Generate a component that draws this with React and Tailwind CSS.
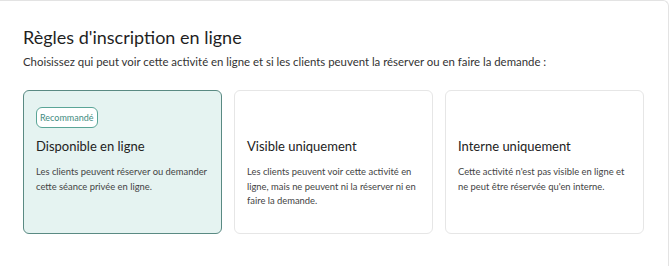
const options = [
  {
    title: 'Disponible en ligne',
    text: 'Les clients peuvent réserver ou demander cette séance privée en ligne.',
    recommended: true,
    selected: true,
  },
  {
    title: 'Visible uniquement',
    text: 'Les clients peuvent voir cette activité en ligne, mais ne peuvent ni la réserver ni en faire la demande.',
  },
  {
    title: 'Interne uniquement',
    text: "Cette activité n'est pas visible en ligne et ne peut être réservée qu'en interne.",
  },
];

function OptionCard({ option }) {
  return (
    <div
      className={`w-[199px] h-[144px] rounded-[6px] border px-[12px] pt-[12px] ${
        option.selected ? 'bg-[#e5f3f1] border-[#5a8a83]' : 'bg-white border-[#e6e6e6]'
      }`}
    >
      <div className="h-[21px]">
        {option.recommended && (
          <span className="inline-flex items-center h-[21px] px-[3px] rounded-[6px] border border-[#5aa597] bg-white text-[9px] text-[#3f8c7f]">
            Recommandé
          </span>
        )}
      </div>
      <h3 className="mt-[13px] text-[13px] leading-[18px] text-[#222]">{option.title}</h3>
      <p className="mt-[10px] text-[9.4px] leading-[14.5px] text-[#444]">{option.text}</p>
    </div>
  );
}

export default function App() {
  return (
    <div className="w-[670px] h-[266px] bg-white overflow-hidden font-['Lato',sans-serif]">
      <div className="ml-[-10px] w-[679px] h-[300px] border-t border-r border-[#e3e3e3] rounded-tr-[6px] pl-[33px] pt-[24px]">
        <h2 className="text-[18px] leading-[24px] text-[#1f1f1f]">Règles d'inscription en ligne</h2>
        <p className="mt-[5px] text-[11.4px] leading-[16px] text-[#333]">
          Choisissez qui peut voir cette activité en ligne et si les clients peuvent la réserver ou en faire la demande :
        </p>
        <div className="mt-[20px] flex gap-[12px]">
          {options.map(o => (
            <OptionCard key={o.title} option={o} />
          ))}
        </div>
      </div>
    </div>
  );
}
